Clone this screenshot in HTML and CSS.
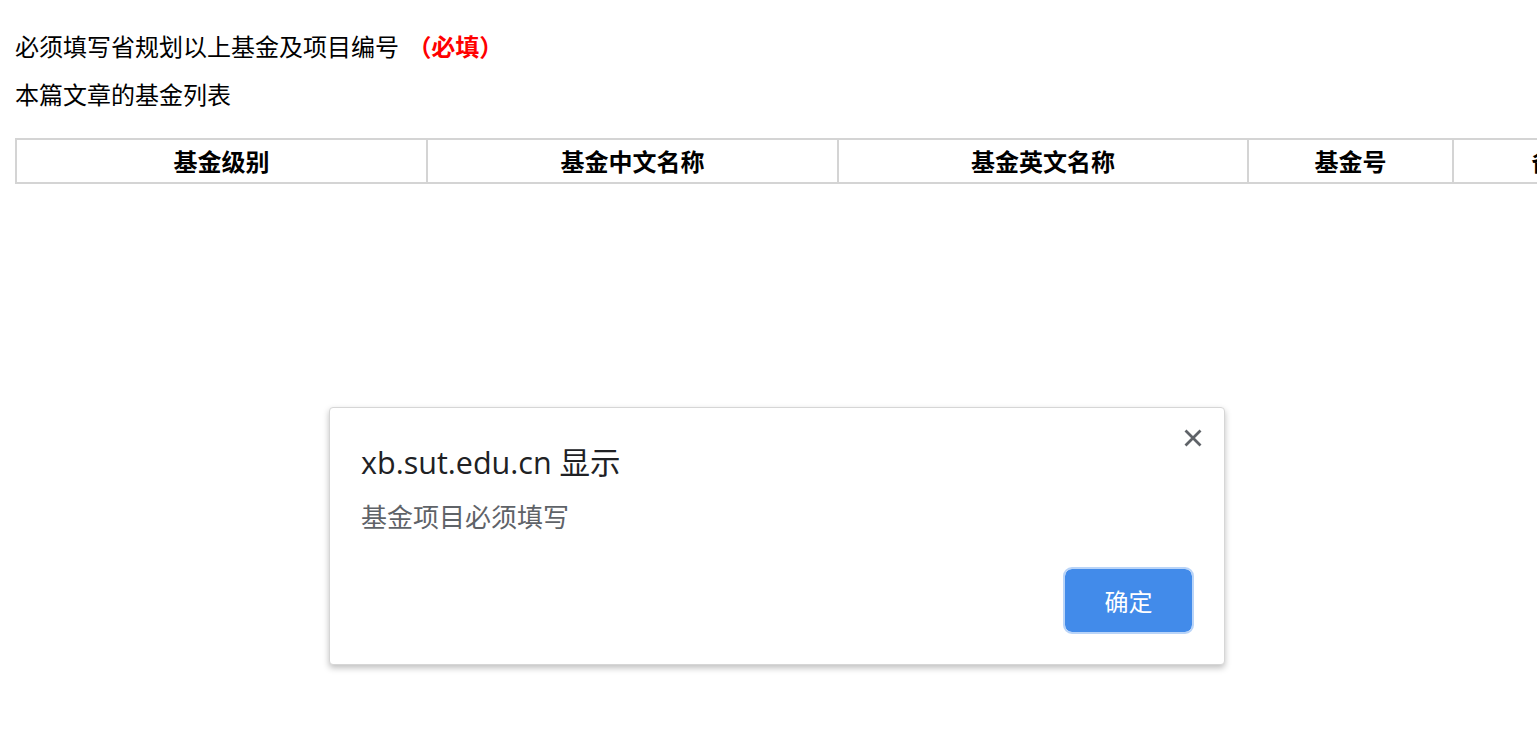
FILE: index.html
```html
<!DOCTYPE html>
<html lang="zh-CN">
<head>
<meta charset="utf-8">
<title>基金列表</title>
<link rel="stylesheet" href="styles.css">
</head>
<body>
<div class="page">
  <p class="line">必须填写省规划以上基金及项目编号 <b class="req">（必填）</b></p>
  <p class="line">本篇文章的基金列表</p>
  <table class="fund-table">
    <thead>
      <tr>
        <th class="c-wide">基金级别</th>
        <th class="c-wide">基金中文名称</th>
        <th class="c-wide c-third">基金英文名称</th>
        <th class="c-narrow">基金号</th>
        <th class="c-narrow">备注</th>
        <th class="c-narrow">操作</th>
      </tr>
    </thead>
  </table>
</div>

<div class="dialog">
  <button class="close" aria-label="关闭">
    <svg width="18" height="18" viewBox="0 0 18 18"><path d="M1.5 1.5 L16.5 16.5 M16.5 1.5 L1.5 16.5" stroke="#5f6368" stroke-width="2.8" stroke-linecap="butt"/></svg>
  </button>
  <div class="dlg-title">xb.sut.edu.cn 显示</div>
  <div class="dlg-msg">基金项目必须填写</div>
  <div class="dlg-actions">
    <button class="ok">确定</button>
  </div>
</div>
</body>
</html>
```
FILE: styles.css
```css
html, body {
  margin: 0;
  padding: 0;
  background: #fff;
  overflow: hidden;
}
body {
  font-family: "Noto Sans CJK SC", "Noto Sans", sans-serif;
  color: #000;
  width: 1537px;
  height: 753px;
  position: relative;
}
.page {
  padding: 22px 0 0 15px;
}
.line {
  margin: 0;
  font-size: 24px;
  line-height: 48px;
  white-space: nowrap;
}
.req {
  color: #ff0000;
  font-weight: bold;
  margin-left: 3px;
}
.fund-table {
  margin-top: 20px;
  margin-left: 0;
  border-collapse: collapse;
  table-layout: fixed;
  width: 1846px;
}
.fund-table th {
  border: 2px solid #d4d4d4;
  font-size: 24px;
  font-weight: bold;
  line-height: 36px;
  padding: 3px 0;
  text-align: center;
}
.c-wide { width: 409px; }
.c-third { width: 408px; }
.c-narrow { width: 203px; }

.dialog {
  position: absolute;
  left: 329px;
  top: 407px;
  width: 896px;
  height: 258px;
  box-sizing: border-box;
  background: #fff;
  border-radius: 4px;
  border: 1px solid #d6d6d6;
  box-shadow: 0 3px 6px rgba(0,0,0,0.25);
  padding: 34px 30px 0 31px;
  display: flex;
  flex-direction: column;
}
.close {
  position: absolute;
  right: 22px;
  top: 21px;
  width: 18px;
  height: 18px;
  padding: 0;
  border: 0;
  background: none;
}
.close svg { display: block; }
.dlg-title {
  font-family: "Open Sans", "Noto Sans CJK SC", sans-serif;
  font-size: 30.5px;
  line-height: 40px;
  color: #202124;
}
.dlg-msg {
  margin-top: 16px;
  font-size: 26px;
  line-height: 36px;
  color: #5f6368;
}
.dlg-actions {
  margin-top: auto;
  margin-bottom: 30px;
  display: flex;
  justify-content: flex-end;
}
.ok {
  width: 131px;
  height: 67px;
  border: 2px solid #b9d4f8;
  border-radius: 9px;
  background: #428bea;
  background-clip: padding-box;
  color: #fff;
  font-family: "Noto Sans CJK SC", sans-serif;
  font-size: 24px;
  padding: 0;
}
```
